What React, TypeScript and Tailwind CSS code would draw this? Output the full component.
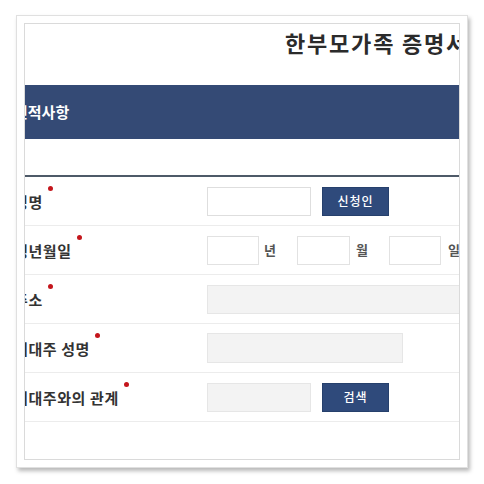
import React from "react";

const font = { fontFamily: '"Noto Sans CJK KR", "Noto Sans", sans-serif' };

function Dot() {
  return <span className="inline-block w-[5px] h-[5px] rounded-full bg-[#c4161c] ml-[5px] relative -top-[13px] shrink-0" />;
}

function Label({ text }: { text: string }) {
  return (
    <div className="w-[193px] -ml-[11px] shrink-0 flex items-center">
      <span className="text-[15px] leading-[15px] font-bold text-[#333] whitespace-nowrap tracking-[0.6px]">{text}</span>
      <Dot />
    </div>
  );
}

function Btn({ text }: { text: string }) {
  return (
    <button className="ml-[11px] w-[67px] h-[29px] bg-[#2f4a7b] border border-[#26406c] text-white text-[12px] font-medium tracking-[1px] shrink-0">
      {text}
    </button>
  );
}

function Row({ children }: { children: React.ReactNode }) {
  return <div className="h-[49px] border-b border-[#ececec] flex items-center">{children}</div>;
}

export default function App() {
  return (
    <div className="w-[484px] h-[484px] bg-white overflow-hidden" style={font}>
      <div className="ml-[16px] mt-[15px] w-[452px] h-[453px] border border-[#e0e0e0] shadow-[2px_3px_4px_rgba(0,0,0,0.28)] p-[7px] bg-white">
        <div className="w-[436px] h-[437px] border border-[#dadada] overflow-hidden bg-white">
          <div className="h-[61px]">
            <div className="pl-[260px] pt-[7px] text-[22px] leading-[22px] font-bold text-[#2b2b2b] whitespace-nowrap tracking-[1.8px]">
              한부모가족 증명서
            </div>
          </div>
          <div className="h-[54px] bg-[#344a75] flex items-center">
            <span className="-ml-[11px] text-[15px] font-bold text-white whitespace-nowrap">인적사항</span>
          </div>
          <div className="h-[36px]" />
          <div className="h-[2px] bg-[#4e5a68]" />
          <Row>
            <Label text="성명" />
            <div className="w-[104px] h-[29px] border border-[#dedede] bg-white shrink-0" />
            <Btn text="신청인" />
          </Row>
          <Row>
            <Label text="생년월일" />
            <div className="w-[52px] h-[29px] border border-[#e2e2e2] bg-white shrink-0" />
            <span className="ml-[5px] w-[33px] text-[13px] font-bold text-[#555] shrink-0">년</span>
            <div className="w-[53px] h-[29px] border border-[#e2e2e2] bg-white shrink-0" />
            <span className="ml-[6px] w-[33px] text-[13px] font-bold text-[#555] shrink-0">월</span>
            <div className="w-[52px] h-[29px] border border-[#e2e2e2] bg-white shrink-0" />
            <span className="ml-[7px] text-[13px] font-bold text-[#555] shrink-0">일</span>
          </Row>
          <Row>
            <Label text="주소" />
            <div className="w-[280px] h-[29px] border border-[#e6e6e6] bg-[#f3f3f3] shrink-0" />
          </Row>
          <Row>
            <Label text="세대주 성명" />
            <div className="w-[196px] h-[30px] border border-[#e6e6e6] bg-[#f3f3f3] shrink-0" />
          </Row>
          <Row>
            <Label text="세대주와의 관계" />
            <div className="w-[104px] h-[29px] border border-[#e6e6e6] bg-[#f3f3f3] shrink-0" />
            <Btn text="검색" />
          </Row>
        </div>
      </div>
    </div>
  );
}
